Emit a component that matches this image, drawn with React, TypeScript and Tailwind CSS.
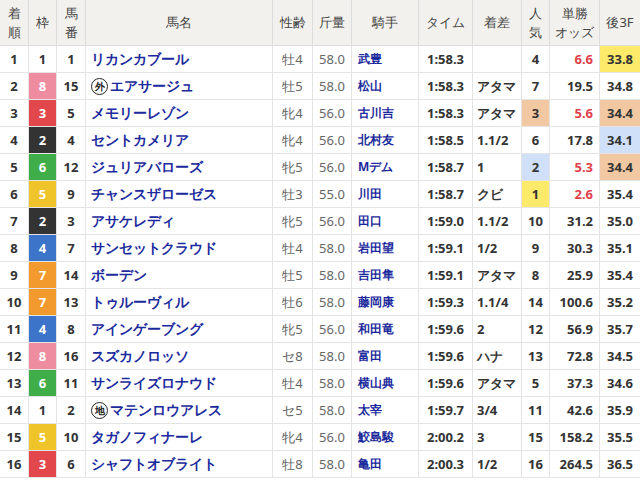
const FRAME: Record<number, string> = {
  1: 'bg-white text-[#333]',
  2: 'bg-[#333333] text-white',
  3: 'bg-[#e2474b] text-white',
  4: 'bg-[#3b74c9] text-white',
  5: 'bg-[#eec42a] text-white',
  6: 'bg-[#3fae49] text-white',
  7: 'bg-[#f29a2e] text-white',
  8: 'bg-[#ee8ca0] text-white',
}

const HI: Record<number, string> = {
  1: 'bg-[#fde96a]',
  2: 'bg-[#cfe0f8]',
  3: 'bg-[#f1c8a2]',
}

// pos, frame, num, name, sex, weight, jockey, time, margin, pop, odds, 3f, 3f rank, mark
const rows: [number, number, number, string, string, string, string, string, string, number, string, string, number, string?][] = [
  [1, 1, 1, 'リカンカブール', '牡4', '58.0', '武豊', '1:58.3', '', 4, '6.6', '33.8', 1],
  [2, 8, 15, 'エアサージュ', '牡5', '58.0', '松山', '1:58.3', 'アタマ', 7, '19.5', '34.8', 0, '外'],
  [3, 3, 5, 'メモリーレゾン', '牝4', '56.0', '古川吉', '1:58.3', 'アタマ', 3, '5.6', '34.4', 3],
  [4, 2, 4, 'セントカメリア', '牝4', '56.0', '北村友', '1:58.5', '1.1/2', 6, '17.8', '34.1', 2],
  [5, 6, 12, 'ジュリアバローズ', '牝5', '56.0', 'Mデム', '1:58.7', '1', 2, '5.3', '34.4', 3],
  [6, 5, 9, 'チャンスザローゼス', '牡3', '55.0', '川田', '1:58.7', 'クビ', 1, '2.6', '35.4', 0],
  [7, 2, 3, 'アサケレディ', '牝5', '56.0', '田口', '1:59.0', '1.1/2', 10, '31.2', '35.0', 0],
  [8, 4, 7, 'サンセットクラウド', '牡4', '58.0', '岩田望', '1:59.1', '1/2', 9, '30.3', '35.1', 0],
  [9, 7, 14, 'ボーデン', '牡5', '58.0', '吉田隼', '1:59.1', 'アタマ', 8, '25.9', '35.4', 0],
  [10, 7, 13, 'トゥルーヴィル', '牡6', '58.0', '藤岡康', '1:59.3', '1.1/4', 14, '100.6', '35.2', 0],
  [11, 4, 8, 'アインゲーブング', '牝5', '56.0', '和田竜', '1:59.6', '2', 12, '56.9', '35.7', 0],
  [12, 8, 16, 'スズカノロッソ', 'セ8', '58.0', '富田', '1:59.6', 'ハナ', 13, '72.8', '34.5', 0],
  [13, 6, 11, 'サンライズロナウド', '牡4', '58.0', '横山典', '1:59.6', 'アタマ', 5, '37.3', '34.6', 0],
  [14, 1, 2, 'マテンロウアレス', 'セ5', '58.0', '太宰', '1:59.7', '3/4', 11, '42.6', '35.9', 0, '地'],
  [15, 5, 10, 'タガノフィナーレ', '牝4', '56.0', '鮫島駿', '2:00.2', '3', 15, '158.2', '35.5', 0],
  [16, 3, 6, 'シャフトオブライト', '牡8', '58.0', '亀田', '2:00.3', '1/2', 16, '264.5', '36.5', 0],
]

const cols = 'grid grid-cols-[29px_28px_29px_187px_40px_39px_67px_54px_49px_28px_50px_40px]'

function Mark({ c }: { c: string }) {
  return (
    <span className="inline-flex items-center justify-center w-[17px] h-[17px] rounded-full border-[1.5px] border-[#222] text-[10px] text-[#222] mr-[2px] leading-none">
      {c}
    </span>
  )
}

export default function App() {
  return (
    <div className="w-[640px] h-[480px] overflow-hidden bg-white font-['Noto_Sans_CJK_JP','Noto_Sans',sans-serif] text-[13px] text-[#333]">
      <div className={`${cols} h-[46px] bg-[#f3f1ed] border-b border-[#ddd] text-[13px] text-[#444]`}>
        {[['着', '順'], ['枠'], ['馬', '番'], ['馬名'], ['性齢'], ['斤量'], ['騎手'], ['タイム'], ['着差'], ['人', '気'], ['単勝', 'オッズ'], ['後3F']].map((h, i) => (
          <div key={i} className="flex flex-col items-center justify-center border-r border-[#ddd] last:border-r-0 leading-[19px]">
            {h.map((t) => (
              <span key={t}>{t}</span>
            ))}
          </div>
        ))}
      </div>
      {rows.map((r) => (
        <div key={r[0]} className={`${cols} h-[27px] border-b border-[#e4e4e4] font-bold leading-none`}>
          <div className="flex items-center justify-center border-r border-[#e4e4e4]">{r[0]}</div>
          <div className={`flex items-center justify-center border-r border-[#e4e4e4] ${FRAME[r[1]]}`}>{r[1]}</div>
          <div className="flex items-center justify-center border-r border-[#e4e4e4]">{r[2]}</div>
          <div className="flex items-center pl-[5px] text-[#1b2a9c] text-[14px] border-r border-[#e4e4e4]">
            {r[13] && <Mark c={r[13]} />}
            {r[3]}
          </div>
          <div className="flex items-center justify-center font-normal text-[#666] border-r border-[#e4e4e4]">{r[4]}</div>
          <div className="flex items-center justify-center font-normal text-[#666] border-r border-[#e4e4e4]">{r[5]}</div>
          <div className="flex items-center pl-[6px] text-[#1b2a9c] text-[12px] border-r border-[#e4e4e4]">{r[6]}</div>
          <div className="flex items-center justify-center border-r border-[#e4e4e4]">{r[7]}</div>
          <div className="flex items-center pl-[4px] border-r border-[#e4e4e4]">{r[8]}</div>
          <div className={`flex items-center justify-center border-r border-[#e4e4e4] ${HI[r[9]] ?? ''}`}>{r[9]}</div>
          <div className={`flex items-center justify-end pr-[6px] border-r border-[#e4e4e4] ${parseFloat(r[10]) < 10 ? 'text-[#e0404a]' : ''}`}>{r[10]}</div>
          <div className={`flex items-center justify-center ${HI[r[12]] ?? ''}`}>{r[11]}</div>
        </div>
      ))}
    </div>
  )
}
